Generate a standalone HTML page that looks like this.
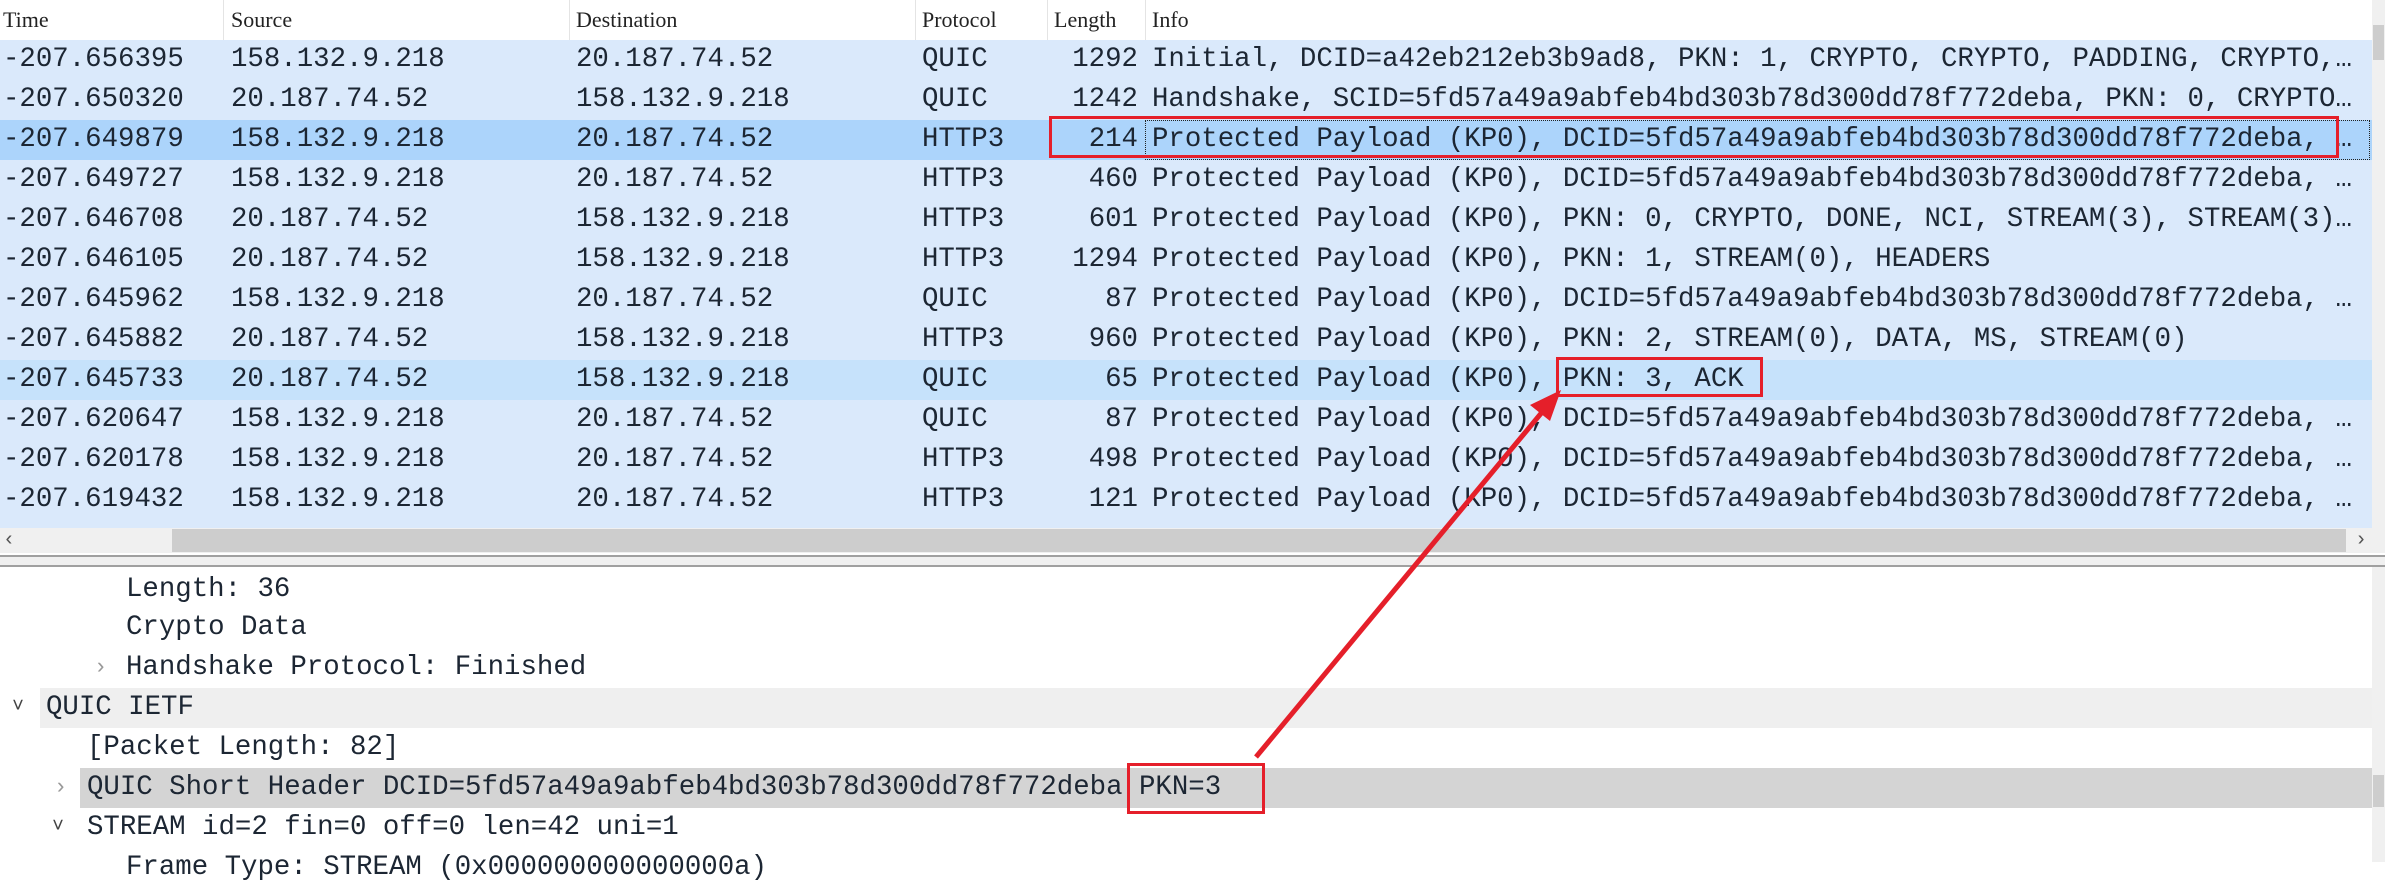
<!DOCTYPE html>
<html><head><meta charset="utf-8"><style>
*{margin:0;padding:0;box-sizing:border-box}
body{width:2385px;height:862px;overflow:hidden;background:#fff;position:relative;font-family:"Liberation Mono",monospace;font-size:27.4px;color:#1c2633}
.hdr{position:absolute;left:0;top:0;width:2372px;height:40px;background:#fff;font-family:"Liberation Serif","Noto Serif CJK SC",serif;font-size:22px;color:#222}
.hdr span{position:absolute;top:0;line-height:40px}
.hdr i{position:absolute;top:0;width:1px;height:40px;background:#e4e4e4}
.row{position:absolute;left:0;width:2372px;height:40px;background:#dae9fb;line-height:40px;white-space:pre}
.row span{position:absolute;top:0}
.sel{background:#acd4fb}
.ack{background:#c6e2fb}
.c1{left:3px}.c2{left:231px}.c3{left:576px}.c4{left:922px}.c5{right:1234px;text-align:right}.c6{left:1152px}
.d{position:absolute;left:0;width:2372px;height:40px;line-height:40px;white-space:pre}
.red{position:absolute;border:3px solid #e51f2a}
</style></head><body>
<div class="hdr"><span style="left:3px">Time</span><i style="left:223px"></i><span style="left:231px">Source</span><i style="left:569px"></i><span style="left:576px">Destination</span><i style="left:915px"></i><span style="left:922px">Protocol</span><i style="left:1047px"></i><span style="left:1054px">Length</span><i style="left:1145px"></i><span style="left:1152px">Info</span></div>

<div class="row" style="top:40px"><span class="c1">-207.656395</span><span class="c2">158.132.9.218</span><span class="c3">20.187.74.52</span><span class="c4">QUIC</span><span class="c5">1292</span><span class="c6">Initial, DCID=a42eb212eb3b9ad8, PKN: 1, CRYPTO, CRYPTO, PADDING, CRYPTO,…</span></div>
<div class="row" style="top:80px"><span class="c1">-207.650320</span><span class="c2">20.187.74.52</span><span class="c3">158.132.9.218</span><span class="c4">QUIC</span><span class="c5">1242</span><span class="c6">Handshake, SCID=5fd57a49a9abfeb4bd303b78d300dd78f772deba, PKN: 0, CRYPTO…</span></div>
<div class="row sel" style="top:120px"><span class="c1">-207.649879</span><span class="c2">158.132.9.218</span><span class="c3">20.187.74.52</span><span class="c4">HTTP3</span><span class="c5">214</span><span class="c6">Protected Payload (KP0), DCID=5fd57a49a9abfeb4bd303b78d300dd78f772deba, …</span><span style="left:1145px;width:1225px;height:40px;border:1px dotted #222"></span></div>
<div class="row" style="top:160px"><span class="c1">-207.649727</span><span class="c2">158.132.9.218</span><span class="c3">20.187.74.52</span><span class="c4">HTTP3</span><span class="c5">460</span><span class="c6">Protected Payload (KP0), DCID=5fd57a49a9abfeb4bd303b78d300dd78f772deba, …</span></div>
<div class="row" style="top:200px"><span class="c1">-207.646708</span><span class="c2">20.187.74.52</span><span class="c3">158.132.9.218</span><span class="c4">HTTP3</span><span class="c5">601</span><span class="c6">Protected Payload (KP0), PKN: 0, CRYPTO, DONE, NCI, STREAM(3), STREAM(3)…</span></div>
<div class="row" style="top:240px"><span class="c1">-207.646105</span><span class="c2">20.187.74.52</span><span class="c3">158.132.9.218</span><span class="c4">HTTP3</span><span class="c5">1294</span><span class="c6">Protected Payload (KP0), PKN: 1, STREAM(0), HEADERS</span></div>
<div class="row" style="top:280px"><span class="c1">-207.645962</span><span class="c2">158.132.9.218</span><span class="c3">20.187.74.52</span><span class="c4">QUIC</span><span class="c5">87</span><span class="c6">Protected Payload (KP0), DCID=5fd57a49a9abfeb4bd303b78d300dd78f772deba, …</span></div>
<div class="row" style="top:320px"><span class="c1">-207.645882</span><span class="c2">20.187.74.52</span><span class="c3">158.132.9.218</span><span class="c4">HTTP3</span><span class="c5">960</span><span class="c6">Protected Payload (KP0), PKN: 2, STREAM(0), DATA, MS, STREAM(0)</span></div>
<div class="row ack" style="top:360px"><span class="c1">-207.645733</span><span class="c2">20.187.74.52</span><span class="c3">158.132.9.218</span><span class="c4">QUIC</span><span class="c5">65</span><span class="c6">Protected Payload (KP0), PKN: 3, ACK</span></div>
<div class="row" style="top:400px"><span class="c1">-207.620647</span><span class="c2">158.132.9.218</span><span class="c3">20.187.74.52</span><span class="c4">QUIC</span><span class="c5">87</span><span class="c6">Protected Payload (KP0), DCID=5fd57a49a9abfeb4bd303b78d300dd78f772deba, …</span></div>
<div class="row" style="top:440px"><span class="c1">-207.620178</span><span class="c2">158.132.9.218</span><span class="c3">20.187.74.52</span><span class="c4">HTTP3</span><span class="c5">498</span><span class="c6">Protected Payload (KP0), DCID=5fd57a49a9abfeb4bd303b78d300dd78f772deba, …</span></div>
<div class="row" style="top:480px"><span class="c1">-207.619432</span><span class="c2">158.132.9.218</span><span class="c3">20.187.74.52</span><span class="c4">HTTP3</span><span class="c5">121</span><span class="c6">Protected Payload (KP0), DCID=5fd57a49a9abfeb4bd303b78d300dd78f772deba, …</span></div>
<div class="row" style="top:520px;height:8px"></div>

<!-- top vertical scrollbar -->
<div style="position:absolute;left:2372px;top:0;width:13px;height:528px;background:#f0f0f0"></div>
<div style="position:absolute;left:2373px;top:25px;width:11px;height:35px;background:#cdcdcd"></div>
<!-- horizontal scrollbar -->
<div style="position:absolute;left:0;top:528px;width:2385px;height:25px;background:#f0f0f0"></div>
<div style="position:absolute;left:172px;top:529px;width:2174px;height:23px;background:#cdcdcd"></div>
<div style="position:absolute;left:3px;top:528px;line-height:25px;font-size:20px;color:#555">‹</div>
<div style="position:absolute;left:2355px;top:528px;line-height:25px;font-size:20px;color:#555">›</div>
<div style="position:absolute;left:0;top:555px;width:2385px;height:2px;background:#a0a0a0"></div>
<div style="position:absolute;left:0;top:557px;width:2385px;height:8px;background:#f0f0f0"></div>
<div style="position:absolute;left:0;top:565px;width:2385px;height:2px;background:#a0a0a0"></div>

<!-- detail pane -->
<div class="d" style="top:570px"><span style="position:absolute;left:126px">Length: 36</span></div>
<div class="d" style="top:608px"><span style="position:absolute;left:126px">Crypto Data</span></div>
<div class="d" style="top:648px"><span style="position:absolute;left:94px;color:#999;font-size:22px">›</span><span style="position:absolute;left:126px">Handshake Protocol: Finished</span></div>
<div class="d" style="top:688px;background:#efefef;left:40px;width:2332px"><span style="position:absolute;left:6px">QUIC IETF</span></div>
<div style="position:absolute;left:12px;top:688px;line-height:40px;font-size:20px;color:#444">˅</div>
<div class="d" style="top:728px"><span style="position:absolute;left:87px">[Packet Length: 82]</span></div>
<div class="d" style="top:768px;background:#d4d4d4;left:80px;width:2292px"><span style="position:absolute;left:7px">QUIC Short Header DCID=5fd57a49a9abfeb4bd303b78d300dd78f772deba PKN=3</span></div>
<div style="position:absolute;left:54px;top:768px;line-height:40px;font-size:22px;color:#999">›</div>
<div class="d" style="top:808px"><span style="position:absolute;left:87px">STREAM id=2 fin=0 off=0 len=42 uni=1</span></div>
<div style="position:absolute;left:52px;top:808px;line-height:40px;font-size:20px;color:#444">˅</div>
<div class="d" style="top:848px"><span style="position:absolute;left:126px">Frame Type: STREAM (0x000000000000000a)</span></div>
<div style="position:absolute;left:2372px;top:567px;width:13px;height:295px;background:#f0f0f0"></div>
<div style="position:absolute;left:2373px;top:775px;width:11px;height:32px;background:#cdcdcd"></div>

<!-- red boxes -->
<div class="red" style="left:1049px;top:116px;width:1290px;height:42px"></div>
<div class="red" style="left:1556px;top:357px;width:207px;height:40px"></div>
<div class="red" style="left:1127px;top:763px;width:138px;height:51px"></div>
<svg style="position:absolute;left:0;top:0" width="2385" height="862">
<line x1="1256" y1="757" x2="1548" y2="405" stroke="#e51f2a" stroke-width="5"/>
<polygon points="1561,390 1530,405 1550,421" fill="#e51f2a"/>
</svg>
</body></html>
